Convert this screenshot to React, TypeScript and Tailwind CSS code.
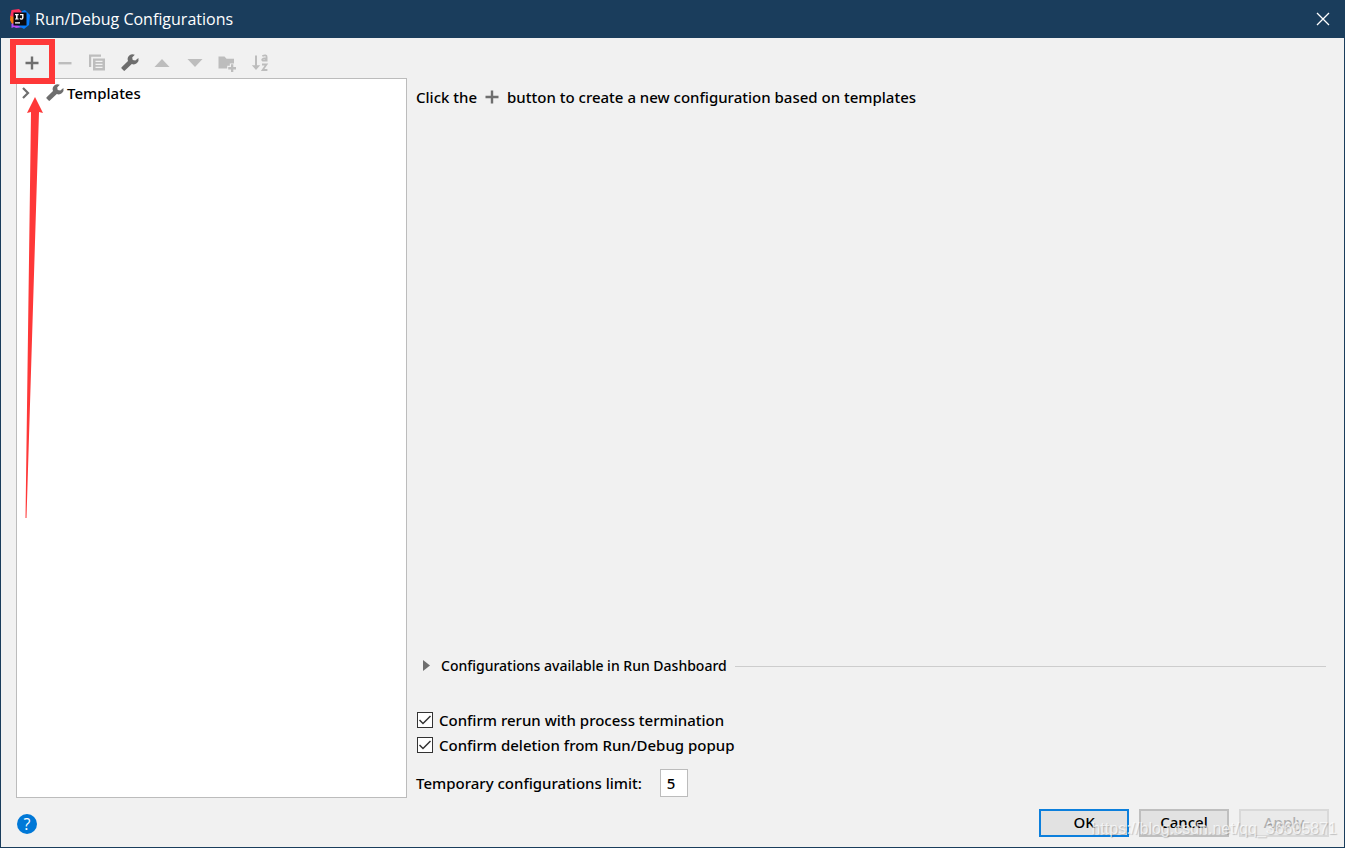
import React from 'react';

type IconProps = { className?: string };

const Plus = ({ className }: IconProps) => (
  <svg className={className} width="20" height="20" viewBox="0 0 20 20" fill="currentColor" aria-hidden="true">
    <path d="M8.800 3.500h2.400v5.300h5.300v2.400h-5.300v5.300H8.800v-5.300H3.500V8.800h5.300z" />
  </svg>
);

const Minus = () => (
  <svg width="20" height="20" viewBox="0 0 20 20" fill="currentColor" aria-hidden="true">
    <path d="M3.500 9h13v2.400h-13z" />
  </svg>
);

const Copy = () => (
  <svg width="20" height="20" viewBox="0 0 20 20" fill="currentColor" aria-hidden="true">
    <path d="M2 1.500h12v2.200H4.200V14H2z" />
    <path fillRule="evenodd" d="M6 5.500h12v12H6zM8.500 7.800v1.300h7V7.800zM8.500 10.800v1.300h7v-1.300zM8.500 13.800v1.300h7v-1.300z" />
  </svg>
);

const Wrench = ({ className }: IconProps) => (
  <svg className={className} width="20" height="20" viewBox="0 0 20 20" fill="currentColor" aria-hidden="true">
    <path d="M14.800 1.700A5 5 0 0 0 8 8L1.600 14.300a.9.900 0 0 0 0 1.300l2 2a.9.900 0 0 0 1.300 0L11.800 11A5 5 0 0 0 18.400 4.900L15.300 7.600 12.700 7.100 12.200 4.500z" />
  </svg>
);

const Up = () => (
  <svg width="20" height="20" viewBox="0 0 20 20" fill="currentColor" aria-hidden="true">
    <path d="M2.500 14L10 6l7.500 8z" />
  </svg>
);

const Down = () => (
  <svg width="20" height="20" viewBox="0 0 20 20" fill="currentColor" aria-hidden="true">
    <path d="M2.500 6h15L10 14z" />
  </svg>
);

const FolderPlus = () => (
  <svg width="20" height="20" viewBox="0 0 20 20" fill="currentColor" aria-hidden="true">
    <path d="M1.500 3.500h6l2 2.300H17v4.700h-4.200v2.300h-2.600v2.700H1.500z" />
    <path d="M14 11.300h2.300v2.800H19v2.300h-2.700V19H14v-2.600h-2.800v-2.300H14z" />
  </svg>
);

const SortAz = () => (
  <svg width="20" height="20" viewBox="0 0 20 20" fill="currentColor" aria-hidden="true">
    <path d="M5 2.500h2v9.700h3.200L6 17l-4.200-4.800H5z" />
    <path fill="none" stroke="currentColor" strokeWidth="1.800" d="M12.300 3q4.300-1.600 4.300 1v4.400M16.600 5.200c-5.400-.3-5.200 2.700-2.800 2.500q1.800-.2 2.800-1.500M12 11.500h4.500L12.600 17H17.400" />
  </svg>
);

const Logo = () => (
  <svg width="20" height="20" viewBox="0 0 20 20" aria-hidden="true">
    <path fill="#fe315d" d="M1.500 1L9 0l4 4-8 8-5-4z" />
    <path fill="#f97a12" d="M.5 7l6.500 2-1 7-4-1-2-4z" />
    <path fill="#b74af7" d="M1.500 15l5.500-2 7 5-8 1-2-1-2.500 1z" />
    <path fill="#087cfa" d="M12 2l3-1 5 5-1 10-5 4-7-4z" />
    <path fill="#0b0b0f" d="M3.500 3.500h13v13h-13z" />
    <path fill="#fff" d="M5 13.200h5v1.200H5zM5 5h3.600v1.200h-1v3.200h1v1.200H5V9.400h1V6.200H5zM10 5h3.500v3.700q0 2-2.100 2-1.300 0-1.900-.9l.8-.8q1.800 1.200 1.800-.5V6.200H10z" />
  </svg>
);

const tools = [
  { label: 'Remove configuration', icon: <Minus />, disabled: true },
  { label: 'Copy configuration', icon: <Copy />, disabled: true },
  { label: 'Edit templates', icon: <Wrench />, disabled: false },
  { label: 'Move up', icon: <Up />, disabled: true },
  { label: 'Move down', icon: <Down />, disabled: true },
  { label: 'Create new folder', icon: <FolderPlus />, disabled: true },
  { label: 'Sort configurations', icon: <SortAz />, disabled: true },
];

const toolClass =
  'flex h-6 items-center justify-center text-[#6e6e6e] disabled:text-[#bdbdbd]';

function Check({ label }: { label: string }) {
  return (
    <label className="flex h-[25px] items-center gap-[6px]">
      <span className="relative flex size-4">
        <input
          type="checkbox"
          defaultChecked
          className="peer size-4 appearance-none border border-[#333] bg-white"
        />
        <svg
          className="pointer-events-none absolute inset-0 hidden peer-checked:block"
          width="16"
          height="16"
          viewBox="0 0 16 16"
          fill="none"
          stroke="#333"
          strokeWidth="1.500"
          aria-hidden="true"
        >
          <path d="M2.500 8L6 11.500 13.500 4" />
        </svg>
      </span>
      {label}
    </label>
  );
}

export default function App() {
  return (
    <div className="relative flex min-h-screen flex-col overflow-hidden border border-t-0 border-[#1a3d5c] bg-[#f1f1f1] font-['Noto_Sans','Open_Sans',sans-serif] text-[15px] leading-5 font-medium text-black">
      <header className="flex h-[38px] shrink-0 items-center bg-[#1a3d5c] pr-[13px] pl-[9px] text-white">
        <Logo />
        <h1 className="ml-[5px] flex-1 font-['Open_Sans',sans-serif] text-base font-normal">Run/Debug Configurations</h1>
        <button type="button" aria-label="Close">
          <svg width="16" height="16" viewBox="0 0 16 16" stroke="currentColor" strokeWidth="1.300" aria-hidden="true">
            <path d="M2 2l12 12M14 2L2 14" />
          </svg>
        </button>
      </header>

      <div role="toolbar" aria-label="Configuration actions" className="ml-[15px] grid h-10 w-[260px] shrink-0 grid-cols-8 items-center pt-[9px]">
        <span className="relative flex justify-center">
          <button type="button" aria-label="Add new configuration" className={toolClass}>
            <Plus />
          </button>
          <span className="pointer-events-none absolute -top-3 left-[-6px] z-10 size-[45px] border-[6px] border-[#fe3838]" />
        </span>
        {tools.map((t) => (
          <button key={t.label} type="button" aria-label={t.label} disabled={t.disabled} className={toolClass}>
            {t.icon}
          </button>
        ))}
      </div>

      <main className="flex flex-1">
        <nav aria-label="Configurations" className="relative ml-[15px] w-[391px] shrink-0 border border-[#bcbcbc] bg-white">
          <button type="button" className="flex h-7 items-center pl-[3px]">
            <svg width="12" height="12" viewBox="0 0 12 12" fill="none" stroke="#6e6e6e" strokeWidth="2.200" aria-hidden="true">
              <path d="M3 1l5 5-5 5" />
            </svg>
            <Wrench className="ml-[13px] text-[#6e6e6e]" />
            <span className="ml-[2px]">Templates</span>
          </button>
          <svg className="pointer-events-none absolute top-[18px] left-[8px]" width="20" height="422" viewBox="0 0 20 422" aria-hidden="true">
            <path fill="#fe3838" d="M10 0l8 16-4-1L1.500 421H.5L6 15l-4 1z" />
          </svg>
        </nav>

        <section className="flex min-w-0 flex-1 flex-col pr-[18px] pl-[9px]">
          <p className="flex h-[38px] items-center">
            Click the <Plus className="mx-[5px] text-[#6e6e6e]" /> button to create a new configuration based on templates
          </p>
          <div className="mt-auto flex items-center">
            <button type="button" className="flex items-center text-sm leading-5">
              <svg className="ml-[6px]" width="12" height="14" viewBox="0 0 12 14" fill="#6e6e6e" aria-hidden="true">
                <path d="M1 1l7 5.500L1 12z" />
              </svg>
              <span className="ml-[7px]">Configurations available in Run Dashboard</span>
            </button>
            <span className="ml-2 h-px flex-1 bg-[#cdcdcd]" />
          </div>
          <div className="mt-[31px] pl-px">
            <Check label="Confirm rerun with process termination" />
            <Check label="Confirm deletion from Run/Debug popup" />
          </div>
          <div className="mt-[12px] mb-px flex items-center gap-[18px]">
            <label htmlFor="limit">Temporary configurations limit:</label>
            <input id="limit" defaultValue="5" className="h-7 w-7 border border-[#bcbcbc] bg-white px-[6px]" />
          </div>
        </section>
      </main>

      <footer className="flex h-[49px] shrink-0 items-center gap-[10px] pr-[15px] pl-4">
        <button type="button" aria-label="Help" className="mt-[3px] mr-auto flex size-5 items-center justify-center rounded-full bg-[#0078d7] font-['Open_Sans',sans-serif] text-base font-normal text-white">
          ?
        </button>
        <button type="button" className="flex h-7 w-[90px] items-center justify-center border-2 border-[#0c7fdc] bg-[#e2e2e2] pb-[2px]">OK</button>
        <button type="button" className="flex h-7 w-[90px] items-center justify-center border-2 border-[#bfbfbf] bg-[#e2e2e2] pb-[2px]">Cancel</button>
        <button type="button" disabled className="flex h-7 w-[90px] items-center justify-center border-2 border-[#d9d9d9] bg-[#eaeaea] pb-[2px] text-[#b0b0b0]">Apply</button>
      </footer>
      <span className="pointer-events-none absolute right-[7px] bottom-[8px] font-['Liberation_Sans',sans-serif] text-base leading-5 font-normal text-white/70 [text-shadow:1px_1px_1px_rgba(0,0,0,0.2)]">
        https://blog.csdn.net/qq_36605871
      </span>
    </div>
  );
}
